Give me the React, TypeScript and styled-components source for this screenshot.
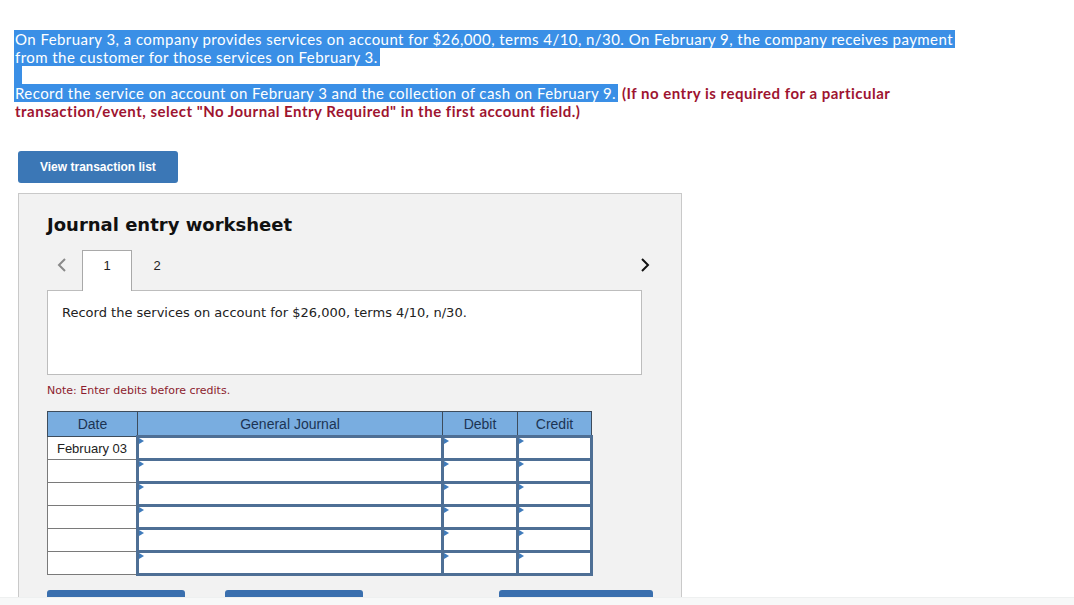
import styled, { createGlobalStyle } from "styled-components";

const GlobalStyle = createGlobalStyle`
    html, body {
        margin: 0;
        padding: 0;
        background: #ffffff;
    }
`;

const Page = styled.div`
    height: 597px;
    overflow: hidden;
    padding: 30px 15px 0;
    box-sizing: border-box;
    background: #ffffff;
`;

const Footer = styled.div`
    height: 8px;
    background: #f7f8f8;
    border-top: 1px solid #eef0f0;
`;

const Intro = styled.div`
    font-family: Lato, "Open Sans", sans-serif;
    font-size: 15px;
    color: #222;
`;

const Line = styled.div`
    height: 18px;
    line-height: 18px;
    white-space: nowrap;
`;

const Sel = styled.span<{ $blank?: boolean }>`
    display: inline-block;
    height: 18px;
    line-height: 18px;
    background: #3a8fe6;
    color: #ffffff;
    letter-spacing: 0.44px;
    margin-left: -1px;
    padding: 0 2px 0 1px;
    width: ${(p) => (p.$blank ? "5px" : "auto")};
    vertical-align: top;
`;

const Warn = styled.span`
    color: #9e1430;
    font-weight: 700;
    letter-spacing: 0.5px;
`;

const BlueButton = styled.button`
    display: block;
    margin: 31px 0 0 3px;
    width: 160px;
    height: 32px;
    border: none;
    border-radius: 3px;
    background: #3b77b6;
    color: #ffffff;
    font-family: "Liberation Sans", Arial, sans-serif;
    font-size: 12px;
    font-weight: 700;
    text-align: left;
    padding: 0 0 0 22px;
`;

const Panel = styled.section`
    margin: 10px 0 0 3px;
    width: 664px;
    height: 430px;
    box-sizing: border-box;
    background: #f2f2f2;
    border: 1px solid #c9c9c9;
    padding: 19px 0 0 28px;
`;

const Title = styled.h2`
    margin: 0;
    font-family: Verdana, "DejaVu Sans", sans-serif;
    font-size: 18px;
    line-height: 24px;
    font-weight: 700;
    color: #111;
`;

const TabRow = styled.div`
    display: flex;
    align-items: flex-start;
    width: 595px;
    height: 40px;
    margin-top: 13px;
`;

const Arrow = styled.div<{ $end?: boolean }>`
    width: ${(p) => (p.$end ? "24px" : "35px")};
    height: 30px;
    display: flex;
    align-items: center;
    justify-content: center;
    margin-left: ${(p) => (p.$end ? "auto" : "0")};
    margin-right: ${(p) => (p.$end ? "-15px" : "0")};
    padding-right: ${(p) => (p.$end ? "0" : "5px")};
    box-sizing: border-box;
`;

const Tab = styled.div<{ $active?: boolean }>`
    position: relative;
    z-index: 1;
    width: 50px;
    height: 41px;
    box-sizing: border-box;
    padding-top: 7px;
    text-align: center;
    font-family: "Liberation Sans", Arial, sans-serif;
    font-size: 13px;
    line-height: 16px;
    color: #222;
    background: ${(p) => (p.$active ? "#ffffff" : "transparent")};
    border: 1px solid ${(p) => (p.$active ? "#a9a9a9" : "transparent")};
    border-bottom: none;
`;

const Prompt = styled.div`
    width: 595px;
    height: 85px;
    box-sizing: border-box;
    background: #ffffff;
    border: 1px solid #bdbdbd;
    padding: 14px 0 0 14px;
    font-family: Verdana, "DejaVu Sans", sans-serif;
    font-size: 13px;
    line-height: 16px;
    color: #222;
`;

const Note = styled.div`
    margin-top: 10px;
    font-family: Verdana, "DejaVu Sans", sans-serif;
    font-size: 11px;
    line-height: 12px;
    color: #8c1c2e;
`;

const Journal = styled.table`
    margin-top: 14px;
    border-collapse: collapse;
    table-layout: fixed;
    width: 544px;
    font-family: "Liberation Sans", Arial, sans-serif;
    font-size: 13px;
`;

const Head = styled.th`
    height: 23px;
    padding: 0;
    background: #79ade0;
    border: 1px solid #3d4c5c;
    color: #1c3454;
    font-size: 14px;
    font-weight: 400;
    text-align: center;
`;

const DateCell = styled.td`
    height: 22px;
    padding: 0;
    background: #ffffff;
    border: 1px solid #7a7a7a;
    text-align: center;
    color: #222;
`;

const InputCell = styled.td`
    position: relative;
    height: 19px;
    padding: 0;
    background: #ffffff;
    border: 3px solid #4e6f95;
    &::before {
        content: "";
        position: absolute;
        left: 0;
        top: 0;
        border-left: 5px solid #3f7bbb;
        border-top: 3px solid transparent;
        border-bottom: 3px solid transparent;
    }
`;

const ActionRow = styled.div`
    display: flex;
    margin-top: 14px;
`;

const Action = styled.div<{ $w: number; $gap: number }>`
    width: ${(p) => p.$w}px;
    margin-left: ${(p) => p.$gap}px;
    height: 32px;
    border-radius: 3px;
    background: #3a6fae;
`;

function Chevron({ dir, color }: { dir: "left" | "right"; color: string }) {
    const pts = dir === "left" ? "8,1 2,7 8,13" : "2,1 8,7 2,13";
    return (
        <svg width="10" height="14" viewBox="0 0 10 14">
            <polyline points={pts} fill="none" stroke={color} strokeWidth="2" />
        </svg>
    );
}

const rows = ["February 03", "", "", "", "", ""];

export default function App() {
    return (
        <>
            <GlobalStyle />
            <Page>
                <Intro>
                    <Line>
                        <Sel>
                            On February 3, a company provides services on account for $26,000, terms 4/10, n/30. On
                            February 9, the company receives payment
                        </Sel>
                    </Line>
                    <Line>
                        <Sel>from the customer for those services on February 3.</Sel>
                    </Line>
                    <Line>
                        <Sel $blank />
                    </Line>
                    <Line>
                        <Sel>Record the service on account on February 3 and the collection of cash on February 9.</Sel>{" "}
                        <Warn>(If no entry is required for a particular</Warn>
                    </Line>
                    <Line>
                        <Warn>transaction/event, select "No Journal Entry Required" in the first account field.)</Warn>
                    </Line>
                </Intro>

                <BlueButton>View transaction list</BlueButton>

                <Panel>
                    <Title>Journal entry worksheet</Title>
                    <TabRow>
                        <Arrow>
                            <Chevron dir="left" color="#8a8a8a" />
                        </Arrow>
                        <Tab $active>1</Tab>
                        <Tab>2</Tab>
                        <Arrow $end>
                            <Chevron dir="right" color="#111" />
                        </Arrow>
                    </TabRow>
                    <Prompt>Record the services on account for $26,000, terms 4/10, n/30.</Prompt>
                    <Note>Note: Enter debits before credits.</Note>

                    <Journal>
                        <colgroup>
                            <col style={{ width: 90 }} />
                            <col style={{ width: 305 }} />
                            <col style={{ width: 75 }} />
                            <col style={{ width: 74 }} />
                        </colgroup>
                        <thead>
                            <tr>
                                <Head>Date</Head>
                                <Head>General Journal</Head>
                                <Head>Debit</Head>
                                <Head>Credit</Head>
                            </tr>
                        </thead>
                        <tbody>
                            {rows.map((d, i) => (
                                <tr key={i}>
                                    <DateCell>{d}</DateCell>
                                    <InputCell />
                                    <InputCell />
                                    <InputCell />
                                </tr>
                            ))}
                        </tbody>
                    </Journal>

                    <ActionRow>
                        <Action $w={138} $gap={0} />
                        <Action $w={138} $gap={40} />
                        <Action $w={154} $gap={136} />
                    </ActionRow>
                </Panel>
            </Page>
            <Footer />
        </>
    );
}
